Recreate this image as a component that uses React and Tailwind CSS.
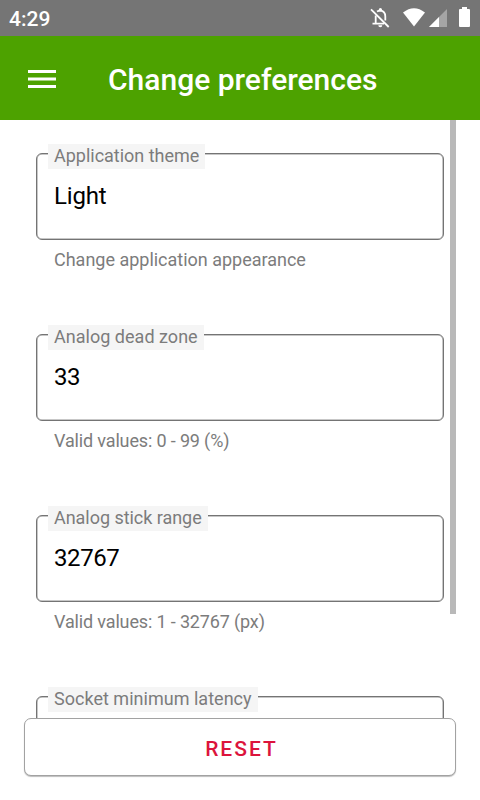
function Field({ label, value, hint, labelClass = "", valueClass = "", hintClass = "" }) {
  return (
    <div className="h-[181px] shrink-0">
      <div className="relative h-[87px] rounded-[6px] border border-[#747474] pl-[17px] pt-[26px] shadow-[inset_0_0_0_0.5px_#909090]">
        <span className="absolute left-[11px] -top-[10px] h-[25px] bg-[#f5f5f5] px-[6px] text-[18px] leading-[23px] text-[#7c7c7c] whitespace-nowrap">
          <span className={labelClass}>{label}</span>
        </span>
        <div className={`text-[24px] leading-[32px] text-black ${valueClass}`}>{value}</div>
      </div>
      <div className={`pl-[18px] pt-[8px] text-[18px] leading-[24px] text-[#7c7c7c] ${hintClass}`}>{hint}</div>
    </div>
  );
}

const fields = [
  { label: "Application theme", value: "Light", hint: "Change application appearance", labelClass: "tracking-[-0.01px]", valueClass: "tracking-[-0.15px]", hintClass: "tracking-[-0.01px]" },
  { label: "Analog dead zone", value: "33", hint: "Valid values: 0 - 99 (%)", labelClass: "tracking-[0.02px]", valueClass: "tracking-[-0.4px]", hintClass: "tracking-[-0.15px]" },
  { label: "Analog stick range", value: "32767", hint: "Valid values: 1 - 32767 (px)", labelClass: "tracking-[-0.04px]", valueClass: "tracking-[-0.4px]", hintClass: "tracking-[-0.15px]" },
  { label: "Socket minimum latency", value: "", hint: "", labelClass: "tracking-[0.02px]" },
];

export default function App() {
  return (
    <div className="flex h-[800px] w-[480px] flex-col overflow-hidden bg-white font-['Roboto',sans-serif]">
      <div className="flex h-9 shrink-0 items-center justify-between bg-[#757575] pl-[9px] text-white">
        <span className="pt-px text-[21px] font-medium leading-9">4:29</span>
        <svg width="116" height="36" viewBox="364 0 116 36" fill="#fff">
          <g fill="none" stroke="#fff" strokeWidth="1.800">
            <path d="M371 9.300 L388.700 27" />
            <path d="M377 11.500 Q378.500 10.600 380.400 10.600 Q385.300 11 385.300 16.500 V20.500" />
            <path d="M375.700 15.500 V23.700 M372.500 23.700 H384" />
          </g>
          <path d="M378.800 11 V9.500 a1.600 1.600 0 0 1 3.200 0 V11z M378.300 25.300 h4 a2 2 0 0 1-4 0z" />
          <path d="M403 12.500 Q414 4 425 12.500 L414 26.500 Z" />
          <path d="M447 9 V27 H429 Z" opacity=".35" />
          <path d="M439 17 V27 H429 Z" />
          <path d="M460 9 h2 V7 h5 v2 h2 a1 1 0 0 1 1 1 v16 a1 1 0 0 1-1 1 h-9 a1 1 0 0 1-1-1 v-16 a1 1 0 0 1 1-1z" />
        </svg>
      </div>
      <header className="flex h-[84px] shrink-0 items-center bg-[#4da200] pl-7 pt-[2px] text-white">
        <svg width="28" height="18" viewBox="0 0 28 18" fill="#fff">
          <path d="M0 0h28v3H0zM0 7.400h28v3H0zM0 15h28v3H0z" />
        </svg>
        <h1 className="ml-[52px] pt-[2px] text-[30px] font-medium leading-[40px]">Change preferences</h1>
      </header>
      <main className="flex h-[598px] shrink-0 overflow-hidden">
        <div className="ml-9 flex w-[408px] flex-col pt-[33px]">
          {fields.map((f) => <Field key={f.label} {...f} />)}
        </div>
        <div className="ml-[6px] h-[494px] w-[6px] bg-[#b9b9b9]" />
      </main>
      <button className="mx-6 h-[58px] shrink-0 rounded-[7px] border border-[#a2a2a2] bg-white pl-[3px] pt-[6px] text-[21px] font-medium tracking-[2px] text-[#dc143c] shadow-[0_1px_1px_#bdbdbd]">RESET</button>
    </div>
  );
}
